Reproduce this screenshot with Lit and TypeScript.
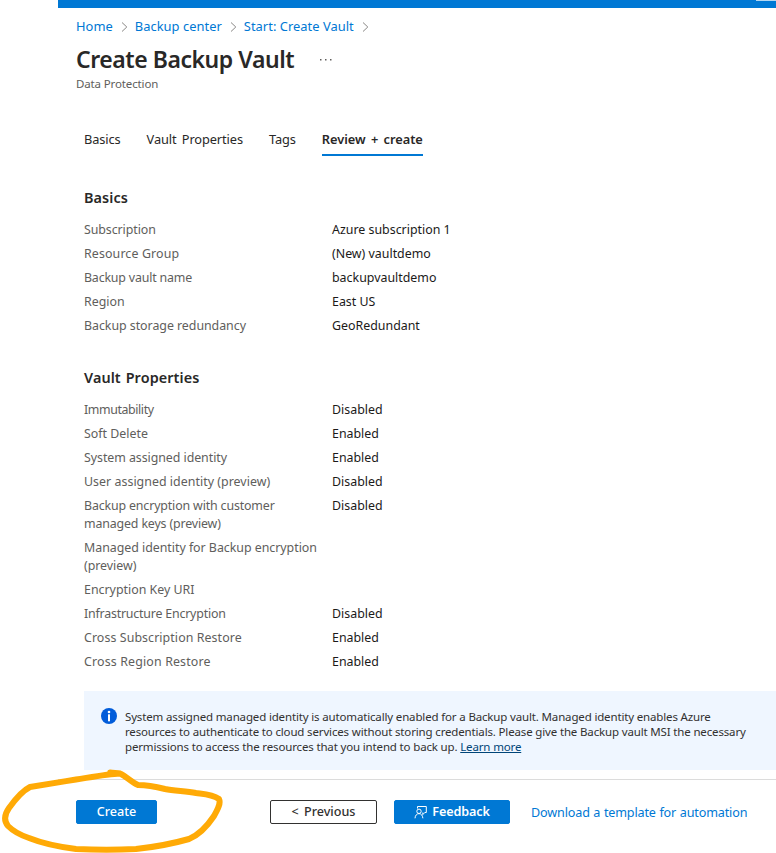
import { LitElement, html, css, svg } from "lit";
import { customElement, property } from "lit/decorators.js";
import { classMap } from "lit/directives/class-map.js";
import { styleMap } from "lit/directives/style-map.js";

interface Row {
  label: string;
  value?: string;
  tracking?: number;
}

const crumbs = ["Home", "Backup center", "Start: Create Vault"];

const tabs = ["Basics", "Vault Properties", "Tags", "Review + create"];

const basics: Row[] = [
  { label: "Subscription", value: "Azure subscription 1", tracking: -0.08 },
  { label: "Resource Group", value: "(New) vaultdemo", tracking: 0.12 },
  { label: "Backup vault name", value: "backupvaultdemo", tracking: -0.18 },
  { label: "Region", value: "East US" },
  { label: "Backup storage redundancy", value: "GeoRedundant", tracking: -0.04 },
];

const vaultProperties: Row[] = [
  { label: "Immutability", value: "Disabled", tracking: -0.4 },
  { label: "Soft Delete", value: "Enabled" },
  { label: "System assigned identity", value: "Enabled", tracking: -0.06 },
  { label: "User assigned identity (preview)", value: "Disabled", tracking: 0.03 },
  { label: "Backup encryption with customer managed keys (preview)", value: "Disabled", tracking: -0.15 },
  { label: "Managed identity for Backup encryption (preview)", tracking: -0.03 },
  { label: "Encryption Key URI" },
  { label: "Infrastructure Encryption", value: "Disabled", tracking: -0.2 },
  { label: "Cross Subscription Restore", value: "Enabled", tracking: 0.08 },
  { label: "Cross Region Restore", value: "Enabled", tracking: 0.15 },
];

@customElement("summary-section")
export class SummarySection extends LitElement {
  @property() heading = "";
  @property({ attribute: false }) rows: Row[] = [];

  static styles = css`
    :host {
      display: block;
    }
    .heading {
      margin: 0 0 10px;
      font-size: 14.4px;
      font-weight: 600;
      line-height: 20px;
      letter-spacing: 0.1px;
      word-spacing: 1px;
      color: #292827;
    }
    .rows {
      margin: 0;
      display: flex;
      flex-direction: column;
    }
    .row {
      display: grid;
      grid-template-columns: 236px 1fr;
      column-gap: 12px;
      padding: 3px 0;
      font-size: 12.4px;
      line-height: 18px;
    }
    .label {
      color: #605e5c;
    }
    .value {
      margin: 0;
      color: #1b1a19;
    }
  `;

  render() {
    return html`
      <h2 class="heading">${this.heading}</h2>
      <dl class="rows">
        ${this.rows.map(
          (r) => html`<div class="row">
            <dt class="label" style=${styleMap({ letterSpacing: `${r.tracking ?? 0}px` })}>${r.label}</dt>
            <dd class="value">${r.value ?? ""}</dd>
          </div>`,
        )}
      </dl>
    `;
  }
}

@customElement("app-root")
export class AppRoot extends LitElement {
  static styles = css`
    :host {
      display: block;
      position: relative;
      box-sizing: border-box;
      width: 776px;
      height: 853px;
      overflow: hidden;
      background: #fff;
      font-family: "Noto Sans", "Open Sans", sans-serif;
      color: #292827;
    }
    .topbar {
      display: flex;
      justify-content: flex-end;
      height: 8px;
      margin-left: 58px;
      background: #0078d4;
    }
    .search-edge {
      width: 20px;
      height: 1px;
      background: #b3d7f2;
    }
    .crumbs {
      display: flex;
      align-items: center;
      height: 20px;
      margin: 8px 0 0 76px;
      font-size: 12.9px;
      line-height: 20px;
      letter-spacing: 0.03px;
      color: #0078d4;
    }
    .chevron {
      width: 7px;
      height: 10px;
      margin: 1px 7px 0 8px;
      fill: none;
      stroke: #8a8886;
    }
    .title-row {
      display: flex;
      align-items: center;
      margin: 7px 0 0 76px;
      height: 32px;
    }
    .title {
      margin: 0;
      font-size: 23px;
      font-weight: 600;
      line-height: 32px;
      letter-spacing: -0.45px;
    }
    .dots {
      width: 12px;
      height: 2px;
      margin: 2px 0 0 26px;
      fill: #605e5c;
    }
    .subtitle {
      margin: 1px 0 0 76px;
      font-size: 11.5px;
      line-height: 16px;
      letter-spacing: -0.13px;
      color: #605e5c;
    }
    .tabs {
      display: flex;
      gap: 26px;
      margin: 37px 0 0 84px;
      font-size: 12.8px;
    }
    .tab {
      height: 25px;
      line-height: 20px;
      letter-spacing: -0.1px;
      word-spacing: 2px;
      border-bottom: 2px solid transparent;
    }
    .tab.active {
      font-weight: 600;
      letter-spacing: -0.02px;
      border-bottom-color: #0078d4;
    }
    .basics {
      margin: 32px 0 0 84px;
    }
    .props {
      margin: 30px 0 0 84px;
    }
    .info {
      display: flex;
      align-items: flex-start;
      box-sizing: border-box;
      height: 79px;
      margin: 17px 0 0 84px;
      padding: 17px 0 0 17px;
      background: #eff6ff;
    }
    .info-icon {
      flex: none;
      width: 16px;
      height: 16px;
      margin-right: 8px;
    }
    .info-text {
      margin: 1px 0 0;
      font-size: 11.5px;
      line-height: 15px;
      letter-spacing: -0.155px;
      white-space: nowrap;
      color: #323130;
    }
    .learn {
      color: #004578;
      text-decoration: underline;
    }
    .footer {
      display: flex;
      align-items: center;
      margin-top: 9px;
      margin-left: 58px;
      padding: 20px 0 0 18px;
      border-top: 1px solid #dcdcdc;
      font-size: 13px;
    }
    .btn {
      display: flex;
      align-items: center;
      justify-content: center;
      box-sizing: border-box;
      height: 24px;
      padding: 0;
      border: 1px solid #0078d4;
      border-radius: 2px;
      background: #0078d4;
      color: #fff;
      font: 500 12.6px/20px "Noto Sans", "Open Sans", sans-serif;
    }
    .create {
      width: 81px;
    }
    .previous {
      width: 107px;
      margin-left: 113px;
      border-color: #323130;
      background: #fff;
      color: #323130;
      word-spacing: 2px;
    }
    .feedback {
      width: 116px;
      margin-left: 17px;
      gap: 5px;
      font-weight: 600;
      letter-spacing: -0.1px;
    }
    .feedback-icon {
      width: 13px;
      height: 13px;
      fill: none;
      stroke: #fff;
    }
    .template {
      margin-left: 21px;
      color: #0078d4;
      font-size: 12.6px;
      letter-spacing: -0.15px;
      word-spacing: 0.5px;
    }
    .marker {
      position: absolute;
      left: 0;
      top: 763px;
      width: 230px;
      height: 90px;
      fill: none;
      stroke: #ffaa06;
      stroke-width: 6;
      stroke-linecap: round;
      stroke-linejoin: round;
      pointer-events: none;
    }
  `;

  render() {
    const chevron = svg`<svg class="chevron" viewBox="0 0 7 10"><path d="M1 .5 L5.8 5 L1 9.5"/></svg>`;
    return html`
      <div class="topbar"><div class="search-edge"></div></div>
      <nav class="crumbs">${crumbs.map((c) => html`<span>${c}</span>${chevron}`)}</nav>
      <div class="title-row">
        <h1 class="title">Create Backup Vault</h1>
        <svg class="dots" viewBox="0 0 12 2">
          <rect x="0" y="0" width="1.5" height="1.5" />
          <rect x="5" y="0" width="1.5" height="1.5" />
          <rect x="10" y="0" width="1.5" height="1.5" />
        </svg>
      </div>
      <p class="subtitle">Data Protection</p>
      <div class="tabs">
        ${tabs.map((t, i) => html`<div class=${classMap({ tab: true, active: i === 3 })}>${t}</div>`)}
      </div>
      <summary-section class="basics" heading="Basics" .rows=${basics}></summary-section>
      <summary-section class="props" heading="Vault Properties" .rows=${vaultProperties}></summary-section>
      <div class="info">
        <svg class="info-icon" viewBox="0 0 16 16">
          <circle cx="8" cy="8" r="8" fill="#015cda" />
          <circle cx="8" cy="4" r="1.3" fill="#fff" />
          <rect x="7" y="6.3" width="2" height="7" fill="#fff" />
        </svg>
        <p class="info-text">
          System assigned managed identity is automatically enabled for a Backup vault. Managed identity enables Azure<br />
          resources to authenticate to cloud services without storing credentials. Please give the Backup vault MSI the necessary<br />
          permissions to access the resources that you intend to back up. <span class="learn">Learn more</span>
        </p>
      </div>
      <div class="footer">
        <button class="btn create">Create</button>
        <button class="btn previous">&lt; Previous</button>
        <button class="btn feedback">
          <svg class="feedback-icon" viewBox="0 0 13 13">
            <path d="M3.5 2.5 V.5 H12.3 V6.5 H10.8 L8.8 8.6 V6.5" />
            <circle cx="5" cy="5.3" r="2.2" />
            <path d="M1 12.3 C1.2 9.4 2.8 7.6 5 7.6 C7.2 7.6 8.6 9.4 8.9 12.3" />
          </svg>
          <span>Feedback</span>
        </button>
        <span class="template">Download a template for automation</span>
      </div>
      <svg class="marker" viewBox="0 763 230 90">
        <path
          d="M110 772.5 C114 773 118 773 120 773.5 C108 774 92 777 76 779.5 C60 782 43 785 30 787 C22 791 14 801 9 808 C4 815 4 821 8 826 C14 832 20 835 29 838 C44 844 60 847 76 849 C95 850 118 850 136 849 C155 847 175 843 189 839 C201 834 208 825 214 816 C218 809 221 803 219 799 C212 794 204 794 196 793 C185 791 174 791 165 789 C157 787 149 785 138 785 C131 782 127 777 121 774"
        />
      </svg>
    `;
  }
}
